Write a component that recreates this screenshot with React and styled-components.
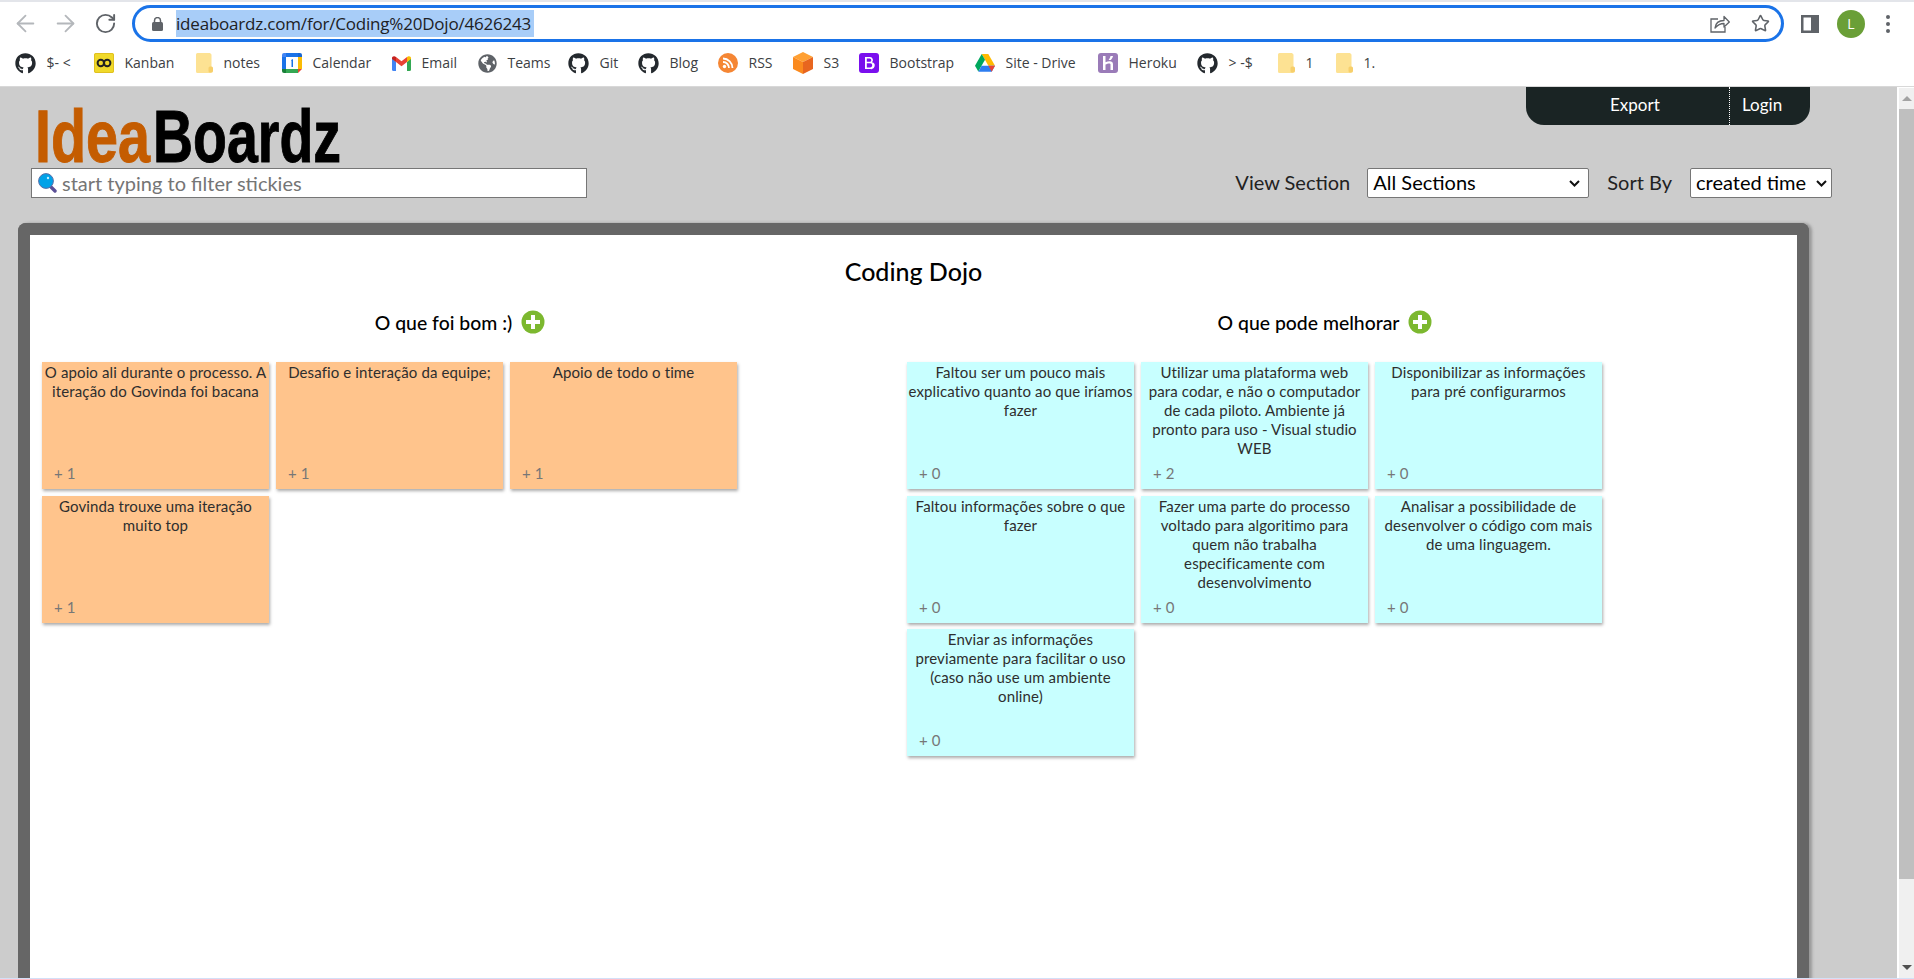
import React from "react";
import styled, { createGlobalStyle } from "styled-components";
import { ArrowLeft, ArrowRight, RotateCw, Star } from "lucide-react";
import { FaGithub, FaGlobeAmericas } from "react-icons/fa";

const Global = createGlobalStyle`
  html, body { margin: 0; padding: 0; overflow: hidden; background: #fff; }
  * { box-sizing: border-box; }
`;

const Window = styled.div`
  width: 1914px;
  height: 979px;
  display: flex;
  flex-direction: column;
  overflow: hidden;
  border-bottom: 1px solid #d3dff7;
`;

const Toolbar = styled.div`
  height: 46px;
  flex: none;
  display: flex;
  align-items: center;
  padding: 0 0 1px 17px;
  border-top: 2px solid #e3e5ea;
  background: #fff;
`;
const NavBtn = styled.span`
  width: 16px;
  display: flex;
  justify-content: center;
  margin-right: ${(p) => p.$mr}px;
  color: ${(p) => p.$color};
  svg { flex: none; }
`;
const UrlBar = styled.div`
  width: 1652px;
  height: 37px;
  margin: 0 17px 0 19px;
  display: flex;
  align-items: center;
  padding: 0 11px 0 17px;
  border: 3px solid #1a73e8;
  border-radius: 19px;
`;
const UrlText = styled.span`
  margin-left: 13px;
  font: 17px/27px "Open Sans", sans-serif;
  letter-spacing: -0.2px;
  color: #202124;
  background: #a8cdf8;
  flex: 1 1 auto;
  max-width: 358px;
  white-space: nowrap;
`;
const UrlActions = styled.div`
  margin-left: auto;
  display: flex;
  align-items: center;
  gap: 21px;
`;
const Avatar = styled.span`
  width: 28px;
  height: 28px;
  border-radius: 50%;
  background: #6a9f37;
  color: #fff;
  font: 14px/28px "Open Sans", sans-serif;
  text-align: center;
  margin-left: 18px;
`;
const Kebab = styled.span`
  margin-left: 21px;
  display: flex;
  flex-direction: column;
  gap: 3px;
  i {
    display: block;
    width: 4px;
    height: 4px;
    border-radius: 50%;
    background: #5f6368;
  }
`;

const Bookmarks = styled.div`
  height: 41px;
  flex: none;
  display: flex;
  align-items: center;
  padding: 0 0 6px 15px;
  background: #fff;
  border-bottom: 1px solid #d8d8d8;
`;
const Bookmark = styled.div`
  width: ${(p) => p.$w}px;
  flex: none;
  display: flex;
  align-items: center;
  gap: 10.5px;
  font: 14px/20px "Open Sans", sans-serif;
  color: #3c4043;
  white-space: nowrap;
  svg { flex: none; display: block; }
`;

const Page = styled.div`
  flex: 1;
  min-height: 0;
  display: flex;
  background: #fff;
`;
const Content = styled.div`
  width: 1897px;
  flex: none;
  background: #ccc;
  overflow: hidden;
  font-family: Lato, sans-serif;
`;
const Scrollbar = styled.div`
  flex: 1;
  margin-left: 2px;
  margin-top: 1px;
  background: #f0f0f0;
  display: flex;
  flex-direction: column;
`;
const ScrollArrow = styled.div`
  height: 21px;
  flex: none;
  display: flex;
  align-items: center;
  justify-content: center;
  &::before {
    content: "";
    border-left: 5px solid transparent;
    border-right: 5px solid transparent;
    ${(p) => (p.$up ? "border-bottom: 5px solid #a3a3a3;" : "border-top: 5px solid #505050;")}
  }
`;
const ScrollThumb = styled.div`
  height: 770px;
  flex: none;
  background: #bfbfbf;
`;
const ScrollRest = styled.div`
  flex: 1;
`;

const TopRow = styled.div`
  height: 81px;
  display: flex;
  justify-content: space-between;
  align-items: flex-start;
  padding: 0 87px 0 38px;
`;
const LogoSvg = styled.svg`
  margin-top: 20px;
  display: block;
  overflow: visible;
  font: 700 75px "Liberation Sans", sans-serif;
  stroke-width: 1px;
`;
const Tab = styled.div`
  width: 284px;
  height: 38px;
  display: flex;
  background: #1a2424;
  border-radius: 0 0 18px 18px;
  color: #fff;
  font-size: 17px;
  line-height: 36px;
`;
const TabCell = styled.div`
  width: ${(p) => p.$w}px;
  padding-left: ${(p) => p.$pl}px;
  ${(p) => p.$divider && "border-left: 1px dotted #fff;"}
`;

const FilterRow = styled.div`
  height: 30px;
  display: flex;
  align-items: center;
  padding: 0 65px 0 31px;
`;
const SearchBox = styled.div`
  width: 556px;
  height: 30px;
  display: flex;
  align-items: center;
  gap: 4px;
  padding-left: 6px;
  background: #fff;
  border: 1px solid #767676;
  font-size: 20px;
  color: #757575;
`;
const Label = styled.span`
  font-size: 20px;
  color: #222;
  margin: ${(p) => p.$m};
`;
const chevron =
  "data:image/svg+xml,%3Csvg xmlns='http://www.w3.org/2000/svg' width='11' height='7'%3E%3Cpath d='M1 1l4.500 4.500L10 1' fill='none' stroke='%23111' stroke-width='2'/%3E%3C/svg%3E";
const Select = styled.select`
  appearance: none;
  width: ${(p) => p.$w}px;
  height: 30px;
  padding: 0 0 2px 5px;
  background: #fff url("${chevron}") no-repeat right ${(p) => p.$arrow}px center;
  border: 1px solid #767676;
  border-radius: 2px;
  font: 20px Lato, sans-serif;
  color: #000;
`;

const Board = styled.div`
  margin: 25px 0 0 18px;
  width: 1791px;
  height: 900px;
  background: #fff;
  border: solid #666;
  border-width: 12px 12px 0;
  border-radius: 8px 8px 0 0;
  box-shadow: 3px 0 3px #999;
  padding-top: 19px;
`;
const Title = styled.h1`
  margin: 0;
  font: 500 25px/34px Lato, sans-serif;
  text-align: center;
  color: #000;
`;
const Columns = styled.div`
  margin-top: 18px;
  padding-left: 12px;
  display: grid;
  grid-template-columns: 836px 836px;
  column-gap: 29px;
`;
const ColHead = styled.div`
  height: 32px;
  display: flex;
  align-items: center;
  justify-content: center;
  gap: 9px;
  font: 500 19.4px Lato, sans-serif;
  color: #000;
`;
const Stickies = styled.div`
  margin-top: 24px;
  display: grid;
  grid-template-columns: repeat(3, 227px);
  grid-auto-rows: 127px;
  column-gap: 7px;
  row-gap: 6.5px;
`;
const Sticky = styled.div`
  display: flex;
  flex-direction: column;
  padding: 1px 1px 6px;
  background: ${(p) => p.$bg};
  box-shadow: 1px 2px 3px #aaa;
  color: #2e2e2e;
  font-size: 15px;
  line-height: 19px;
  letter-spacing: 0.12px;
  text-align: center;
  white-space: pre-line;
`;
const Votes = styled.div`
  margin-top: auto;
  padding-left: 11px;
  text-align: left;
  color: #777;
`;

const Logo = () => (
  <LogoSvg width="303" height="56" viewBox="0 0 303 56">
    <text transform="translate(-3 55) scale(.767 1)" fill="#c45c00" stroke="#c45c00">Idea</text>
    <text transform="translate(115 55) scale(.74 1)" fill="#000" stroke="#000">Boardz</text>
  </LogoSvg>
);

const PlusIcon = () => (
  <svg width="24" height="24" viewBox="0 0 24 24">
    <circle cx="12" cy="12" r="11.5" fill="#7cb82f" />
    <path d="M10 5h4v5h5v4h-5v5h-4v-5H5v-4h5z" fill="#fff" />
  </svg>
);

const SearchIcon = () => (
  <svg width="20" height="20" viewBox="0 0 20 20">
    <path d="M12 13l5 5" stroke="#5b4f96" strokeWidth="3.4" strokeLinecap="round" />
    <circle cx="8" cy="8" r="7.4" fill="#00a2e8" stroke="#5b6fa8" strokeWidth="1" />
    <circle cx="10" cy="5" r="1.2" fill="#bfeeff" />
  </svg>
);

const LockIcon = () => (
  <svg width="11" height="14" viewBox="0 0 11 14">
    <rect x="0" y="5" width="11" height="9" rx="1.5" fill="#5f6368" />
    <path d="M2.5 5.5V3.6a3 3 0 0 1 6 0v1.9" fill="none" stroke="#5f6368" strokeWidth="1.5" />
  </svg>
);

const ShareIcon = () => (
  <svg width="20" height="19" viewBox="0 0 20 19" fill="none" stroke="#5f6368" strokeWidth="1.3">
    <path d="M8 5H1v13h14v-5" />
    <path d="M5 14c.5-4.500 3.500-7.500 9-7.500V2.500l5.300 5.500-5.300 5V9.500c-4 0-6.500 1.500-9 4.500z" strokeLinejoin="round" />
  </svg>
);

const PanelIcon = () => (
  <svg width="18" height="18" viewBox="0 0 18 18">
    <path fillRule="evenodd" d="M0 0h18v18H0zM2.500 2.500v13H10v-13z" fill="#5f6368" />
  </svg>
);

const FolderIcon = () => (
  <svg width="17" height="20" viewBox="0 0 17 20">
    <path d="M1.500 0h12.500l1.500 1.500V20H1.500A1.500 1.500 0 0 1 0 18.500v-17A1.500 1.500 0 0 1 1.500 0z" fill="#fde293" />
    <rect x="12.500" y="13.500" width="4.500" height="6" rx="1.500" fill="#f7cf6b" />
  </svg>
);

const KanbanIcon = () => (
  <svg width="20" height="20" viewBox="0 0 20 20">
    <rect width="20" height="20" rx="2" fill="#f0d92a" />
    <rect x="0.500" y="0.500" width="19" height="19" rx="1.500" fill="none" stroke="#e0c020" />
    <circle cx="6.800" cy="10" r="3.200" fill="none" stroke="#222" strokeWidth="2" />
    <circle cx="13.200" cy="10" r="3.200" fill="none" stroke="#222" strokeWidth="2" />
  </svg>
);

const CalendarIcon = () => (
  <svg width="20" height="20" viewBox="0 0 20 20">
    <rect width="20" height="20" rx="2" fill="#fff" />
    <path d="M0 4h4v12H0z" fill="#1a73e8" />
    <path d="M4 0h12v4H4z" fill="#1a73e8" />
    <path d="M16 4h4v12h-4z" fill="#fbbc04" />
    <path d="M4 16h12v4H4z" fill="#34a853" />
    <path d="M0 16h4v4H2a2 2 0 0 1-2-2z" fill="#188038" />
    <path d="M16 0h2a2 2 0 0 1 2 2v2h-4z" fill="#1967d2" />
    <path d="M16 16h4l-4 4z" fill="#ea4335" />
    <path d="M0 4V2a2 2 0 0 1 2-2h2v4z" fill="#4285f4" />
    <path d="M9 7l2-1v8H9.500V8z" fill="#1a73e8" />
  </svg>
);

const GmailIcon = () => (
  <svg width="19" height="15" viewBox="0 0 19 15">
    <path d="M0 2v11.500A1.500 1.500 0 0 0 1.500 15H4V6z" fill="#4285f4" />
    <path d="M15 15h2.500a1.500 1.500 0 0 0 1.500-1.500V2l-4 4z" fill="#34a853" />
    <path d="M15 1v5l4-3V2c0-1.500-1.700-2.300-3-1.500z" fill="#fbbc04" />
    <path d="M4 6V1l5.500 4.200L15 1v5l-5.500 4.200z" fill="#ea4335" />
    <path d="M0 2v1l4 3V1L3 .5C1.700-.3 0 .5 0 2z" fill="#c5221f" />
  </svg>
);

const RssIcon = () => (
  <svg width="20" height="20" viewBox="0 0 20 20">
    <circle cx="10" cy="10" r="10" fill="#f58634" />
    <circle cx="6.500" cy="13.500" r="1.700" fill="#fff" />
    <path d="M5 9a6 6 0 0 1 6 6M5 5.500A9.500 9.500 0 0 1 14.500 15" fill="none" stroke="#fff" strokeWidth="1.800" />
  </svg>
);

const CubeIcon = () => (
  <svg width="20" height="22" viewBox="0 0 20 22">
    <path d="M10 0l10 5-10 5L0 5z" fill="#ffa033" />
    <path d="M0 5l10 5v12L0 17z" fill="#fb8a1e" />
    <path d="M20 5l-10 5v12l10-5z" fill="#e8661f" />
  </svg>
);

const BootstrapIcon = () => (
  <svg width="20" height="20" viewBox="0 0 20 20">
    <rect width="20" height="20" rx="3" fill="#7a0fee" />
    <path fillRule="evenodd" d="M6 4h5a3 3 0 0 1 2 5.200A3.200 3.200 0 0 1 11.500 16H6zM7.800 5.600v3.200h2.900a1.600 1.600 0 0 0 0-3.200zM7.800 10.300v4.100h3.400a2 2 0 0 0 0-4.100z" fill="#fff" />
  </svg>
);

const DriveIcon = () => (
  <svg width="20" height="18" viewBox="0 0 20 18">
    <path d="M6.700 0h6.600l6.700 11.800h-6.600z" fill="#ffba00" />
    <path d="M6.700 0L0 11.800l3.300 5.800L10 5.800z" fill="#00a85d" />
    <path d="M6.600 11.800H20l-3.300 5.900H3.300z" fill="#2d7df0" />
    <path d="M13.400 11.800L20 11.800 16.700 17.700z" fill="#ea4335" />
  </svg>
);

const HerokuIcon = () => (
  <svg width="20" height="20" viewBox="0 0 20 20">
    <rect width="20" height="20" rx="3" fill="#9a7bb8" />
    <path d="M5 3h2.500v6.200c3-1.200 7.500-2 7.500 2V17h-2.500v-5.500c0-1.800-3-1-5 0V17H5z" fill="#fff" />
    <path d="M12.500 3H15c-.2 1.500-1 2.800-2.200 4h-2.200c1-1.200 1.700-2.500 1.900-4z" fill="#fff" />
  </svg>
);

const Github = () => <FaGithub size={21} color="#24292e" />;

const bookmarks = [
  { icon: <Github />, label: "$- <", w: 79 },
  { icon: <KanbanIcon />, label: "Kanban", w: 102 },
  { icon: <FolderIcon />, label: "notes", w: 86 },
  { icon: <CalendarIcon />, label: "Calendar", w: 110 },
  { icon: <GmailIcon />, label: "Email", w: 86 },
  { icon: <FaGlobeAmericas size={19} color="#5f6368" />, label: "Teams", w: 90 },
  { icon: <Github />, label: "Git", w: 70 },
  { icon: <Github />, label: "Blog", w: 80 },
  { icon: <RssIcon />, label: "RSS", w: 75 },
  { icon: <CubeIcon />, label: "S3", w: 66 },
  { icon: <BootstrapIcon />, label: "Bootstrap", w: 116 },
  { icon: <DriveIcon />, label: "Site - Drive", w: 123 },
  { icon: <HerokuIcon />, label: "Heroku", w: 99 },
  { icon: <Github />, label: "> -$", w: 81 },
  { icon: <FolderIcon />, label: "1", w: 58 },
  { icon: <FolderIcon />, label: "1.", w: 50 },
];

const good = [
  { text: "O apoio ali durante o processo. A iteração do Govinda foi bacana", votes: 1 },
  { text: "Desafio e interação da equipe;", votes: 1 },
  { text: "Apoio de todo o time", votes: 1 },
  { text: "Govinda trouxe uma iteração muito top", votes: 1 },
];

const better = [
  { text: "Faltou ser um pouco mais explicativo quanto ao que iríamos fazer", votes: 0 },
  { text: "Utilizar uma plataforma web\npara codar, e não o computador de cada piloto. Ambiente já pronto para uso - Visual studio\nWEB", votes: 2 },
  { text: "Disponibilizar as informações para pré configurarmos", votes: 0 },
  { text: "Faltou informações sobre o que fazer", votes: 0 },
  { text: "Fazer uma parte do processo voltado para algoritimo para quem não trabalha especificamente com desenvolvimento", votes: 0 },
  { text: "Analisar a possibilidade de desenvolver o código com mais de uma linguagem.", votes: 0 },
  { text: "Enviar as informações previamente para facilitar o uso (caso não use um ambiente online)", votes: 0 },
];

const Column = ({ title, items, color }) => (
  <div>
    <ColHead>
      {title}
      <PlusIcon />
    </ColHead>
    <Stickies>
      {items.map((s) => (
        <Sticky key={s.text} $bg={color}>
          {s.text}
          <Votes>+ {s.votes}</Votes>
        </Sticky>
      ))}
    </Stickies>
  </div>
);

export default function App() {
  return (
    <Window>
      <Global />
      <Toolbar>
        <NavBtn $mr={24} $color="#b4b7bb"><ArrowLeft size={27} strokeWidth={1.6} /></NavBtn>
        <NavBtn $mr={24} $color="#b4b7bb"><ArrowRight size={27} strokeWidth={1.6} /></NavBtn>
        <NavBtn $mr={0} $color="#5f6368"><RotateCw size={23} strokeWidth={2} /></NavBtn>
        <UrlBar>
          <LockIcon />
          <UrlText>ideaboardz.com/for/Coding%20Dojo/4626243</UrlText>
          <UrlActions>
            <ShareIcon />
            <Star size={19} color="#5f6368" strokeWidth={2} />
          </UrlActions>
        </UrlBar>
        <PanelIcon />
        <Avatar>L</Avatar>
        <Kebab><i /><i /><i /></Kebab>
      </Toolbar>
      <Bookmarks>
        {bookmarks.map((b) => (
          <Bookmark key={b.label} $w={b.w}>
            {b.icon}
            {b.label}
          </Bookmark>
        ))}
      </Bookmarks>
      <Page>
        <Content>
          <TopRow>
            <Logo />
            <Tab>
              <TabCell $w={203} $pl={84}>Export</TabCell>
              <TabCell $w={81} $pl={12} $divider>Login</TabCell>
            </Tab>
          </TopRow>
          <FilterRow>
            <SearchBox>
              <SearchIcon />
              start typing to filter stickies
            </SearchBox>
            <Label $m="0 17px 2px auto">View Section</Label>
            <Select $w={222} $arrow={8} defaultValue="all">
              <option value="all">All Sections</option>
            </Select>
            <Label $m="0 18px 2px">Sort By</Label>
            <Select $w={142} $arrow={4} defaultValue="created">
              <option value="created">created time</option>
            </Select>
          </FilterRow>
          <Board>
            <Title>Coding Dojo</Title>
            <Columns>
              <Column title="O que foi bom :)" items={good} color="#ffc48c" />
              <Column title="O que pode melhorar" items={better} color="#c8ffff" />
            </Columns>
          </Board>
        </Content>
        <Scrollbar>
          <ScrollArrow $up />
          <ScrollThumb />
          <ScrollRest />
          <ScrollArrow />
        </Scrollbar>
      </Page>
    </Window>
  );
}
